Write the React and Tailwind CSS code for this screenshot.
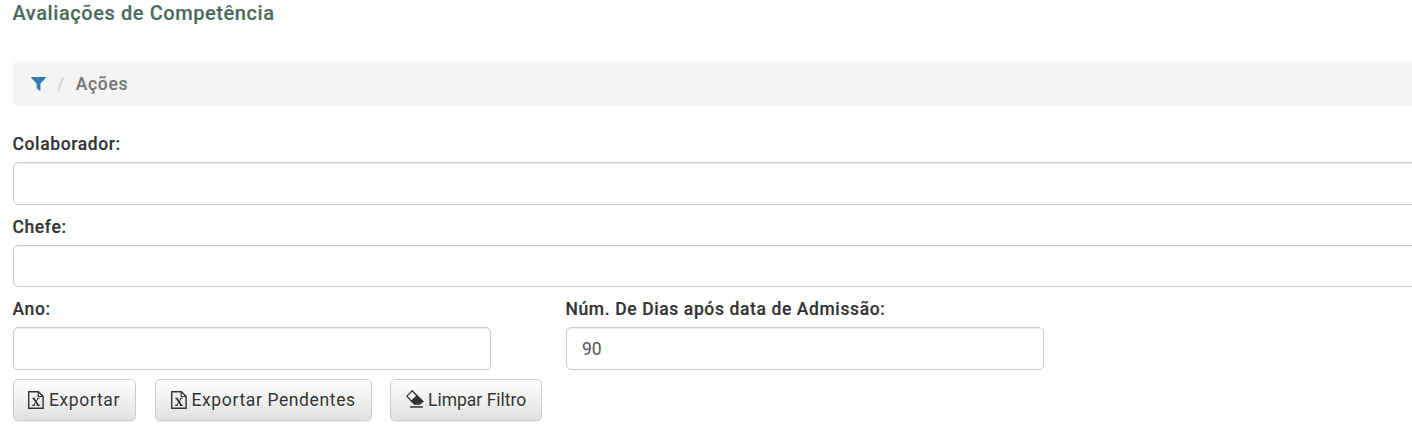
function FunnelIcon() {
  return (
    <svg className="mt-0.5 block h-[15px] w-[15px] shrink-0 fill-[#337ab7]" viewBox="0 0 15 15">
      <path d="M.4 0H14.6V1.2L9.4 6.6V14.2L5.6 11.2V6.6L.4 1.2Z" />
    </svg>
  );
}

function ExcelIcon() {
  return (
    <svg className="block h-[18px] w-4 shrink-0" viewBox="0 0 16 18" fill="none" stroke="#333333">
      <path d="M.7 .7H10.3L15.1 5.3V17.3H.7Z" strokeWidth="1.4" />
      <path d="M10.2 1V5.5H15" strokeWidth="1.2" />
      <path d="M5.6 7.3L10.2 14.3" strokeWidth="1.7" />
      <path d="M10.3 7.3L5.5 14.3" strokeWidth="1" />
      <path d="M4.3 7.3H7.2M9.1 7.3H11.6M4.2 14.4H6.9M8.7 14.4H11.7" strokeWidth="1.1" />
    </svg>
  );
}

function EraserIcon() {
  return (
    <svg className="-mt-0.5 block h-[18px] w-[18px] shrink-0" viewBox="0 0 18 18">
      <path d="M6.2 .8L.9 6.1L5.5 11.3L11 6Z" fill="#ffffff" stroke="#333333" strokeWidth="1.3" strokeLinejoin="round" />
      <path d="M11.5 5.4L5.1 11L8 14.5H13.8L17.6 11.4Z" fill="#333333" stroke="#333333" strokeWidth=".6" strokeLinejoin="round" />
      <path d="M4 16.2H17V17.7H4Z" fill="#333333" />
    </svg>
  );
}

function Field({ label, value = "", className = "", inputClass = "h-[43px]" }) {
  return (
    <label className={`block ${className}`}>
      <span className="-ml-[0.5px] block h-[33px] pt-[3px] whitespace-nowrap text-[17.5px] leading-[25px] font-medium tracking-[0.61px] [-webkit-text-stroke:0.15px]">{label}</span>
      <input
        type="text"
        defaultValue={value}
        className={`block w-full rounded-[5px] border border-[#cccccc] bg-white px-[15px] text-[17.5px] text-[#555555] shadow-[inset_0_1px_1px_rgba(0,0,0,0.075)] outline-none ${inputClass}`}
      />
    </label>
  );
}

function Button({ icon, children, className }) {
  return (
    <button
      type="button"
      className={`flex h-[42px] items-center rounded-[5px] border border-[#cccccc] bg-linear-to-b from-white to-[#e0e0e0] text-[17.5px] whitespace-nowrap shadow-[0_1px_1px_rgba(0,0,0,0.075)] [text-shadow:0_1px_0_#ffffff] ${className}`}
    >
      {icon}
      <span>{children}</span>
    </button>
  );
}

export default function App() {
  return (
    <main className="h-[443px] overflow-hidden bg-white pl-[13px] font-[Roboto,sans-serif] text-[#333333]">
      <h1 className="-ml-[0.5px] h-[61px] text-[20px] leading-[26px] font-medium tracking-[0.58px] text-[#4a6a5c] [-webkit-text-stroke:0.15px]">Avaliações de Competência</h1>
      <nav className="flex h-[45px] items-center rounded-l-[5px] bg-[#f4f4f4] pl-[18px] text-[17.5px] tracking-[0.63px]">
        <FunnelIcon />
        <span className="ml-[11px] pt-0.5 text-[#cccccc]">/</span>
        <span className="ml-[11px] pt-0.5 font-medium text-[#777777] [-webkit-text-stroke:0.15px]">Ações</span>
      </nav>
      <form className="pt-[23px]">
        <div className="-mr-5 flex flex-col gap-[7px]">
          <Field label="Colaborador:" />
          <Field label="Chefe:" inputClass="h-[42px]" />
          <div className="flex gap-[75px]">
            <Field label="Ano:" className="w-[478px]" />
            <Field label="Núm. De Dias após data de Admissão:" value="90" className="w-[478px]" />
          </div>
        </div>
        <div className="mt-[9px] flex">
          <Button icon={<ExcelIcon />} className="w-[123px] gap-[5px] pl-[14px] tracking-[0.62px]">Exportar</Button>
          <Button icon={<ExcelIcon />} className="ml-[19px] w-[217px] gap-[5px] pl-[14.5px] tracking-[0.62px]">Exportar Pendentes</Button>
          <Button icon={<EraserIcon />} className="ml-[18px] w-[152px] gap-1 pl-[15px] tracking-[0px]">Limpar Filtro</Button>
        </div>
      </form>
    </main>
  );
}
